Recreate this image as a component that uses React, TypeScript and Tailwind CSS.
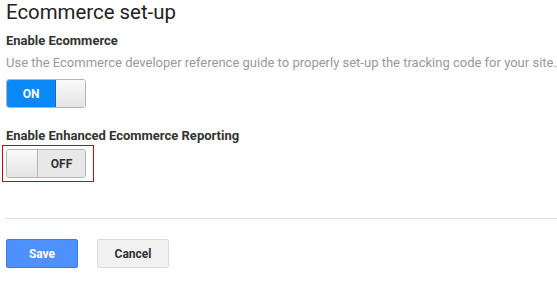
const Toggle = ({ on }: { on: boolean }) => {
  return (
    <div className="flex h-[29px] w-[80px] overflow-hidden rounded-[3px] border border-[#b5b5b5] text-[12px] font-bold">
      {on ? (
        <>
          <div className="flex w-[49px] items-center justify-center bg-[#0a88f5] text-white border-r border-[#0a6fc4]">ON</div>
          <div className="flex-1 bg-gradient-to-b from-[#fafafa] to-[#e4e4e4]"></div>
        </>
      ) : (
        <>
          <div className="w-[31px] border-r border-[#b5b5b5] bg-gradient-to-b from-[#fafafa] to-[#e4e4e4]"></div>
          <div className="flex flex-1 items-center justify-center bg-[#e8e8e8] text-[#333]">OFF</div>
        </>
      )}
    </div>
  );
};

const App = () => {
  return (
    <div className="h-[289px] w-[557px] bg-white font-['Roboto',sans-serif] text-[#222]">
      <h1 className="pl-[6px] text-[20.4px] leading-[24px] text-[#222]">Ecommerce set-up</h1>
      <div className="pl-[6px] pt-[8px]">
        <p className="text-[13px] font-bold leading-[18px] text-[#333]">Enable Ecommerce</p>
        <p className="pt-[4px] text-[13px] leading-[18px] text-[#999]">
          Use the Ecommerce developer reference guide to properly set-up the tracking code for your site.
        </p>
        <div className="pt-[7px]">
          <Toggle on />
        </div>
        <p className="pt-[19px] text-[13px] font-bold leading-[18px] text-[#333]">Enable Enhanced Ecommerce Reporting</p>
      </div>
      <div className="ml-[2px] mt-[0px] w-[92px] border border-[#d40000] p-[3px]">
        <Toggle on={false} />
      </div>
      <div className="ml-[6px] mt-[36px] border-t border-[#ddd]"></div>
      <div className="flex gap-[19px] pl-[6px] pt-[20px] text-[12px] font-bold">
        <button className="h-[29px] w-[72px] rounded-[2px] border border-[#3a7be0] bg-[#4d90fe] text-white">Save</button>
        <button className="h-[29px] w-[72px] rounded-[2px] border border-[#d9d9d9] bg-[#f1f1f1] text-[#333]">Cancel</button>
      </div>
    </div>
  );
};

export default App;
